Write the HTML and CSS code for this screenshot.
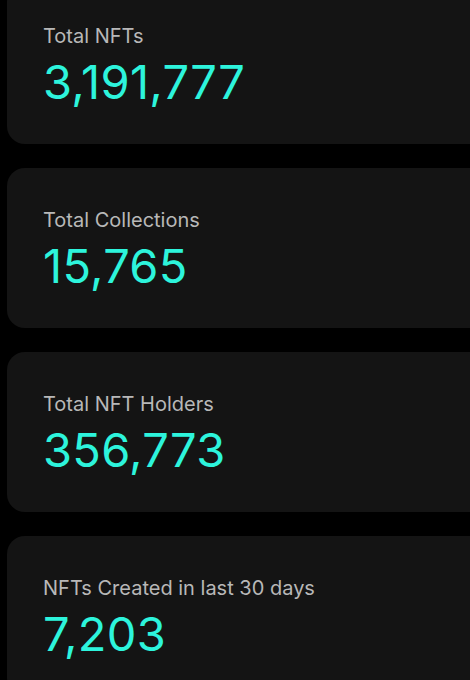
FILE: index.html
```html
<!DOCTYPE html>
<html>
<head>
    <title>NFT Stats</title>
    <meta charset="UTF-8">
    <link rel="stylesheet" href="styles.css">
</head>
<body>
    <!-- 统计卡片 -->
    <div class="stats">
        <div class="stat-card">
            <div class="label">Total NFTs</div>
            <div class="value">3,191,777</div>
        </div>
        <div class="stat-card">
            <div class="label">Total Collections</div>
            <div class="value">15,765</div>
        </div>
        <div class="stat-card">
            <div class="label">Total NFT Holders</div>
            <div class="value">356,773</div>
        </div>
        <div class="stat-card">
            <div class="label">NFTs Created in last 30 days</div>
            <div class="value">7,203</div>
        </div>
    </div>
</body>
</html>
```

FILE: styles.css
```css
body {
    margin: 0;
    padding: 0;
    overflow: hidden;
    background: #000;
    font-family: Inter, 'Liberation Sans', sans-serif;
}

.stats {
    display: flex;
    flex-direction: column;
    gap: 24px;
    margin-top: -16px;
    margin-left: 7px;
    width: 463px;
}

.stat-card {
    box-sizing: border-box;
    height: 160px;
    padding: 40px 36px 0;
    background: #141414;
    border-radius: 18px 0 0 18px;
}

.stat-card .label {
    font-size: 20px;
    line-height: 24px;
    color: #b8b8b8;
    margin-bottom: 10px;
}

.stat-card .value {
    font-size: 47px;
    line-height: 47px;
    letter-spacing: 0.3px;
    color: #2df4dc;
}
```
